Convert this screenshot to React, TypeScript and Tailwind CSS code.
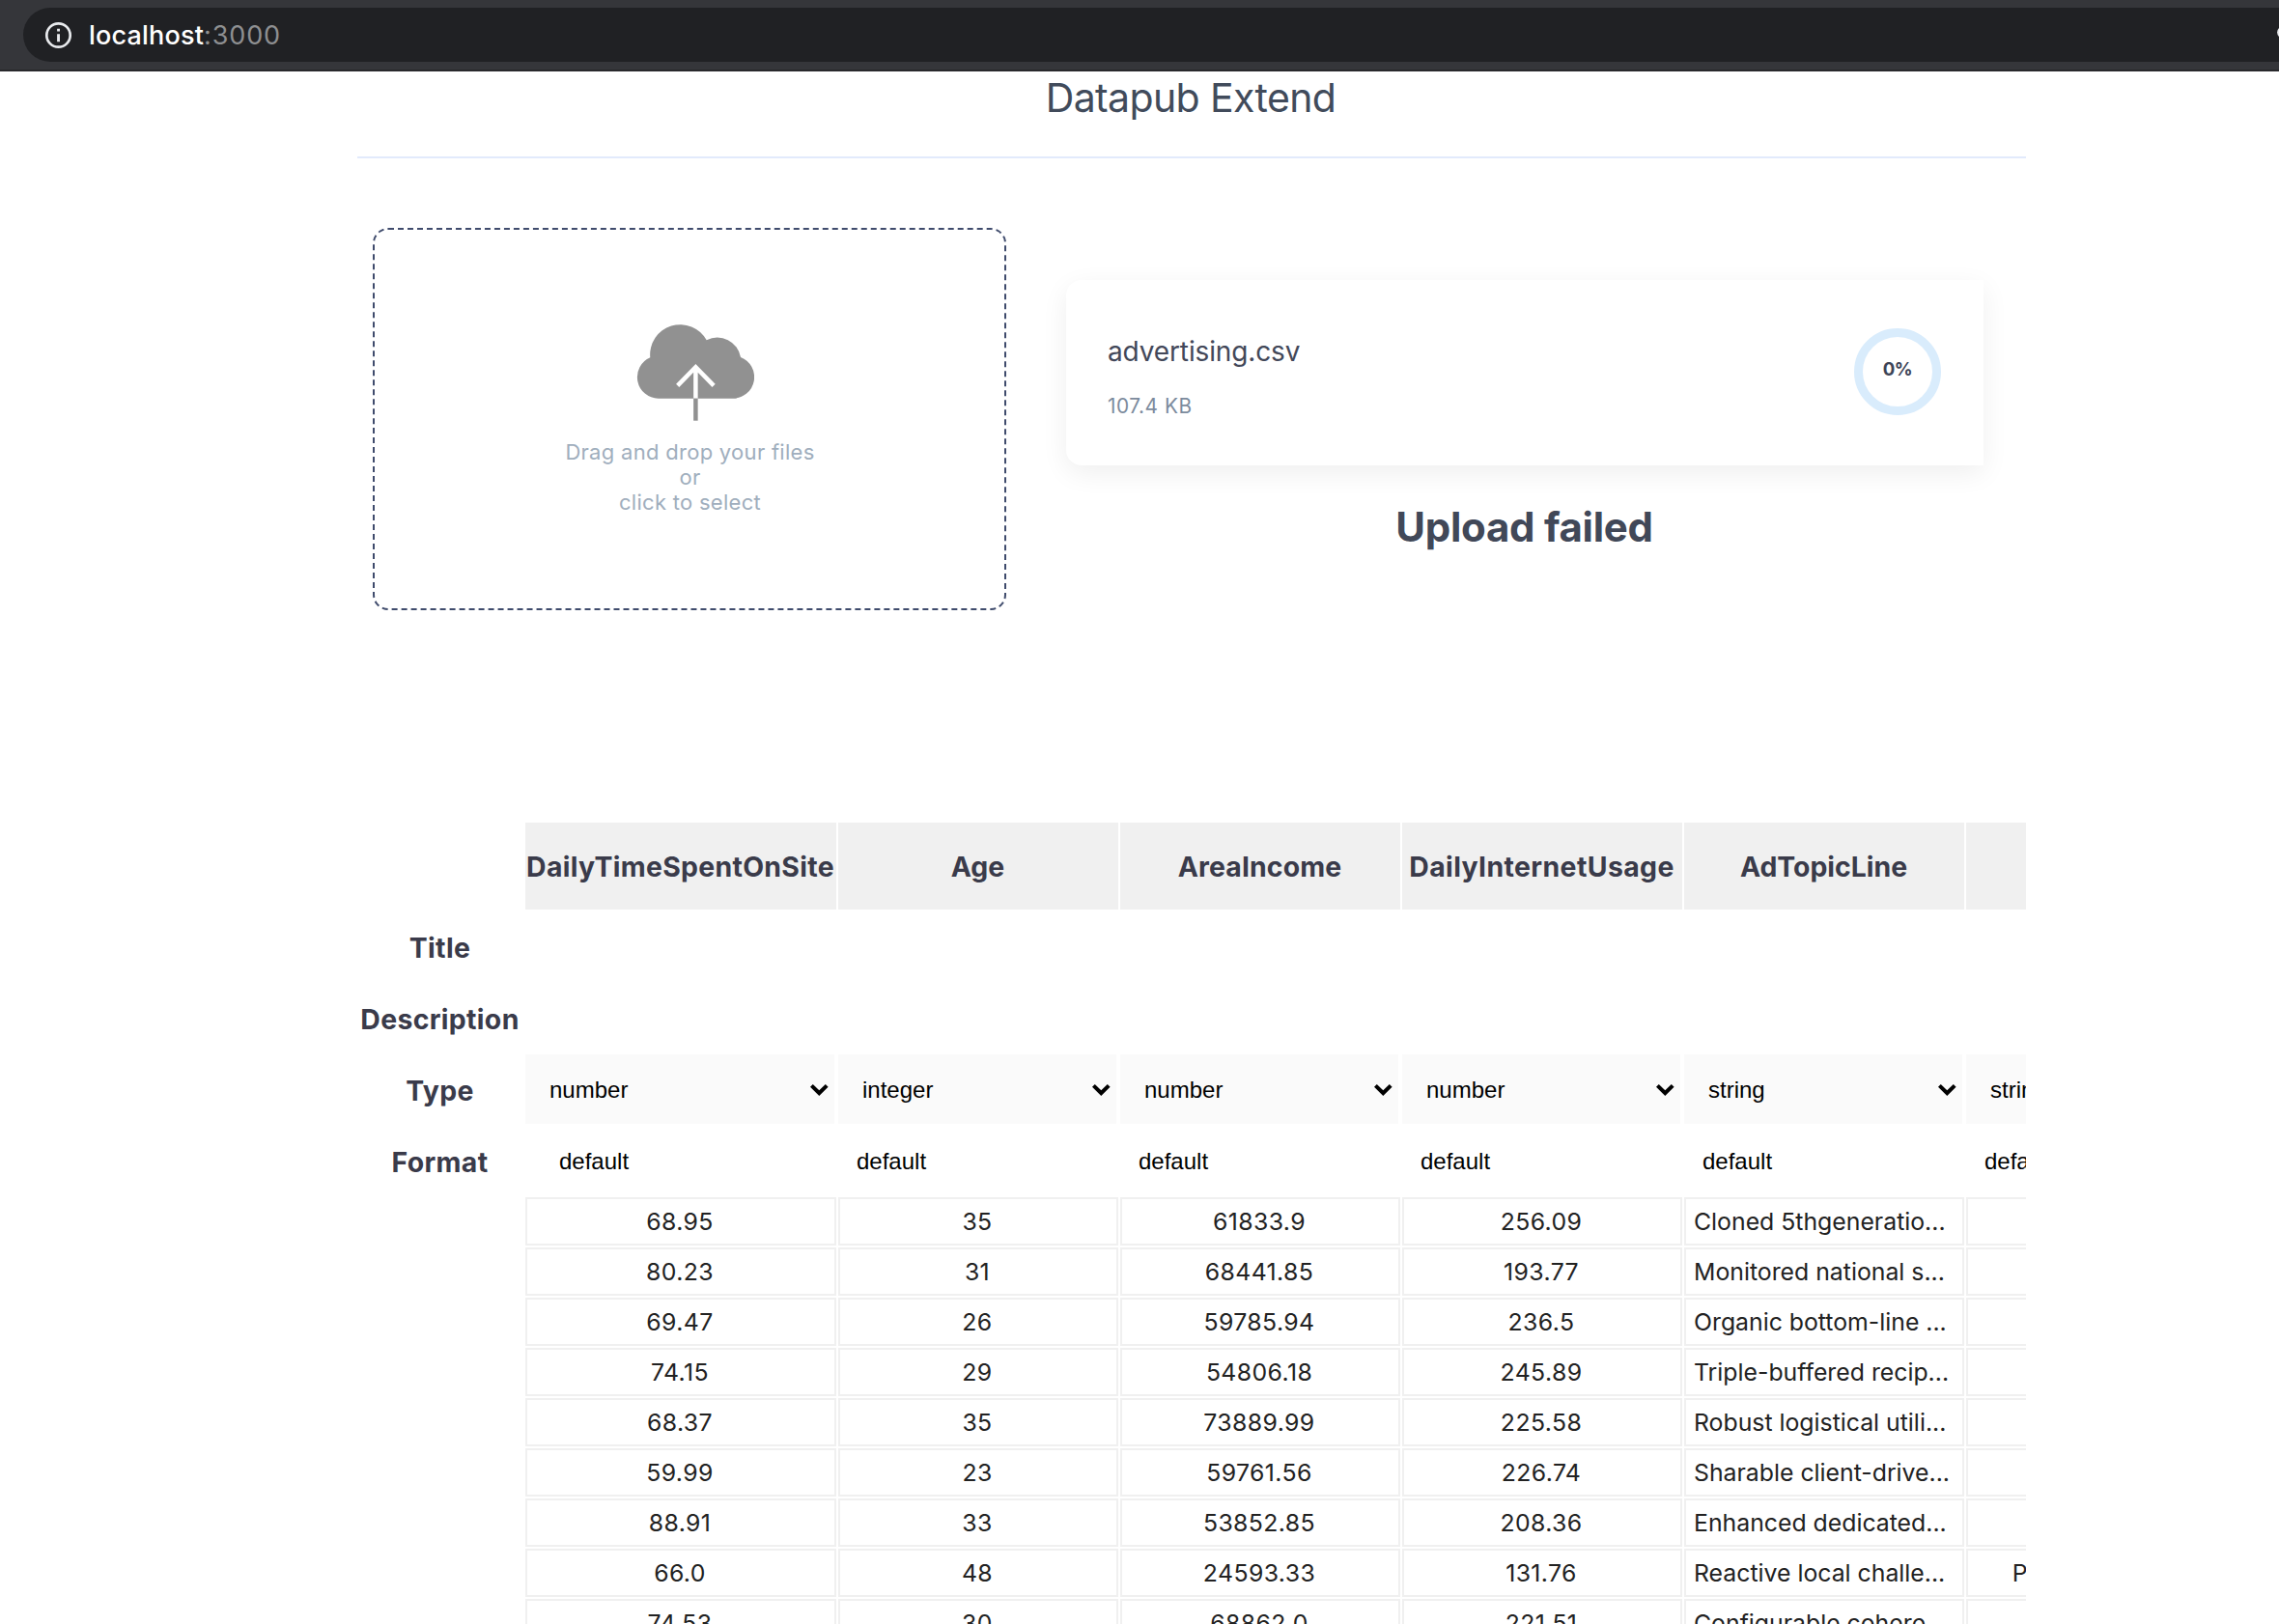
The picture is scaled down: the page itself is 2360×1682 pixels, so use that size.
type Column = { name: string; type: string; tracking: string };

const columns: Column[] = [
  { name: "DailyTimeSpentOnSite", type: "number", tracking: "tracking-[0.31px]" },
  { name: "Age", type: "integer", tracking: "tracking-[0.1px]" },
  { name: "AreaIncome", type: "number", tracking: "tracking-[0.12px]" },
  { name: "DailyInternetUsage", type: "number", tracking: "tracking-[0.4px]" },
  { name: "AdTopicLine", type: "string", tracking: "tracking-[0px]" },
  { name: "City", type: "string", tracking: "tracking-[0.1px]" },
];

const rows: string[][] = [
  ["68.95", "35", "61833.9", "256.09", "Cloned 5thgeneratio...", "Wrightburgh"],
  ["80.23", "31", "68441.85", "193.77", "Monitored national s...", "West Jodi"],
  ["69.47", "26", "59785.94", "236.5", "Organic bottom-line ...", "Davidton"],
  ["74.15", "29", "54806.18", "245.89", "Triple-buffered recip...", "West Terrifurt"],
  ["68.37", "35", "73889.99", "225.58", "Robust logistical utili...", "South Manuel"],
  ["59.99", "23", "59761.56", "226.74", "Sharable client-drive...", "Jamieberg"],
  ["88.91", "33", "53852.85", "208.36", "Enhanced dedicated...", "Brandonstad"],
  ["66.0", "48", "24593.33", "131.76", "Reactive local challe...", "Port Jefferybury"],
  ["74.53", "30", "68862.0", "221.51", "Configurable cohere...", "West Colin"],
];

const grid = "grid w-max grid-cols-[172px_322px_290px_290px_290px_290px_290px] gap-x-0.5";

function AddressBar() {
  return (
    <header className="h-[74px] overflow-hidden border-b-2 border-[#29292c] bg-[#35363a] pt-2 pl-6">
      <div className="relative flex h-14 items-center rounded-l-full bg-[#202124] pl-[22px]">
        <svg width="29" height="29" viewBox="0 0 29 29" fill="none">
          <circle cx="14.5" cy="14.5" r="12.2" stroke="#e8eaed" strokeWidth="2.7" />
          <path d="M13.1 13.2h2.9v8.1h-2.9zM13.1 7.8h2.9v2.8h-2.9z" fill="#e8eaed" />
        </svg>
        <p className="ml-[17px] pt-px text-[27px] leading-8 whitespace-pre">
          <span className="font-medium tracking-[0.19px] text-white">localhost</span>
          <span className="tracking-[0.87px] text-[#8e8f91]">:3000</span>
        </p>
        <svg className="absolute top-5 right-0" width="2" height="11" viewBox="0 0 2 11">
          <circle cx="6.5" cy="5.5" r="6.4" fill="#e8eaed" />
        </svg>
      </div>
    </header>
  );
}

function CloudUpload() {
  return (
    <svg className="ml-3" width="122" height="100" viewBox="0 0 122 100" fill="none">
      <path
        d="M22.7 76.7A22.1 22.1 0 0 1 14.3 34.3A31.2 31.2 0 0 1 72.7 16.3A24.5 24.5 0 0 1 108 34A22.1 22.1 0 0 1 100 76.7Z"
        fill="#919191"
      />
      <path d="M61.4 44V76.7M42.7 63.4L61.4 44.3L80.1 63.4" stroke="#fff" strokeWidth="4.5" />
      <path d="M61.4 76.7V99.7" stroke="#919191" strokeWidth="4.5" />
    </svg>
  );
}

function Chevron() {
  return (
    <svg className="mr-1.5" width="19" height="12" viewBox="0 0 19 12">
      <path d="M0 2.8L2.8 0L9.3 6.2L15.8 0L18.6 2.8L9.3 11.9Z" fill="#000" />
    </svg>
  );
}

function RowLabel({ text }: { text: string }) {
  return (
    <div className="flex items-center justify-center pt-[5px] pr-px text-[28.4px] font-bold tracking-[0.34px] text-[#3a3b4a]">
      {text}
    </div>
  );
}

export default function App() {
  return (
    <div className="h-[1682px] w-full overflow-hidden bg-white font-['Inter',sans-serif]">
      <AddressBar />
      <main className="ml-[370px] w-[1728px]">
        <h1 className="border-b-2 border-[#e2eafc] pt-[3px] pr-0.5 pb-[37px] text-center text-[41px] leading-[48px] tracking-[-0.63px] text-[#414b5b]">
          Datapub Extend
        </h1>

        <section className="mt-[72px] flex items-start pl-4">
          <div className="flex h-[396px] w-[656px] flex-col items-center rounded-2xl border-2 border-dashed border-[#3f4b6c] pt-[98px]">
            <CloudUpload />
            <p className="mt-[19px] pl-px text-center text-[22px] leading-[26px] tracking-[0.29px] text-[#a0aebd]">
              Drag and drop your files
              <br />
              or
              <br />
              click to select
            </p>
          </div>

          <div className="mt-[54px] ml-[62px] w-[950px]">
            <div className="flex h-[192px] items-start justify-between rounded-l-2xl bg-white pr-11 pl-[43px] shadow-[0_8px_28px_rgba(0,0,0,0.065)]">
              <div className="pt-[54px]">
                <p className="text-[28px] leading-10 tracking-[-0.13px] text-[#434859]">advertising.csv</p>
                <p className="mt-[22px] text-[20.8px] leading-[30px] tracking-[0.57px] text-[#7c8b9d]">107.4 KB</p>
              </div>
              <div className="mt-[50px] flex size-[90px] items-center justify-center rounded-full border-[9px] border-[#d9ecfc] pb-[5px] text-[18.6px] font-bold tracking-[-0.4px] text-[#3d4457]">
                0%
              </div>
            </div>
            <h2 className="mt-[39px] pr-px text-center text-[42px] leading-[50px] font-bold tracking-[-0.28px] text-[#414858]">
              Upload failed
            </h2>
          </div>
        </section>

        <section className="mt-[220px] overflow-hidden">
          <div className={`${grid} h-[90px]`}>
            <div />
            {columns.map((c) => (
              <div
                key={c.name}
                className={`flex items-center justify-center bg-[#f0f0f0] pt-[3px] pr-px text-[28.4px] font-bold text-[#3a3b4a] ${c.tracking}`}
              >
                {c.name}
              </div>
            ))}
          </div>

          <div className={`${grid} mt-0.5 h-[72px]`}>
            <RowLabel text="Title" />
          </div>
          <div className={`${grid} mt-0.5 h-[72px]`}>
            <RowLabel text="Description" />
          </div>
          <div className={`${grid} mt-0.5 h-[72px]`}>
            <RowLabel text="Type" />
            {columns.map((c) => (
              <div
                key={c.name}
                className="mr-0.5 flex items-center justify-between bg-[#fafafa] pt-px pl-[25px] font-['Liberation_Sans',sans-serif] text-2xl text-black"
              >
                {c.type}
                <Chevron />
              </div>
            ))}
          </div>
          <div className={`${grid} mt-0.5 h-[72px]`}>
            <RowLabel text="Format" />
            {columns.map((c) => (
              <div
                key={c.name}
                className="mx-auto flex w-[290px] items-center pt-px pl-[19px] font-['Liberation_Sans',sans-serif] text-2xl text-black"
              >
                default
              </div>
            ))}
          </div>

          {rows.map((row) => (
            <div key={row[4]} className={`${grid} mt-0.5 h-[50px]`}>
              <div />
              {row.map((value, i) => (
                <div
                  key={i}
                  className={`flex items-center border-2 border-[#f0f0f0] pt-0.5 text-[24.8px] whitespace-pre text-[#222] ${
                    i === 4 ? "pl-2" : i === 5 ? "justify-center pr-0.5" : "justify-center pr-0.5 tracking-[0.4px]"
                  }`}
                >
                  {value}
                </div>
              ))}
            </div>
          ))}
        </section>
      </main>
    </div>
  );
}
